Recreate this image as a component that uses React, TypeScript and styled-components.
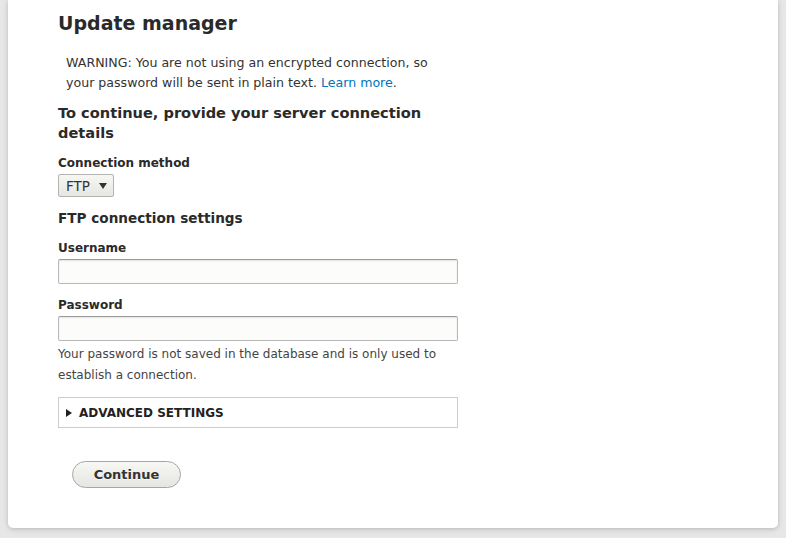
import React from "react";
import styled, { createGlobalStyle } from "styled-components";

const Global = createGlobalStyle`
  html, body { margin: 0; padding: 0; }
  body {
    background: #e7e7e7;
    font-family: "DejaVu Sans", "Lucida Grande", sans-serif;
    color: #333;
    height: 538px;
    overflow: hidden;
  }
`;

const Card = styled.main`
  margin-left: 8px;
  width: 770px;
  box-sizing: border-box;
  padding: 11px 50px 40px;
  background: #fff;
  border-radius: 0 0 5px 5px;
  box-shadow: 0 1px 4px rgba(0, 0, 0, 0.15), 0 2px 8px rgba(0, 0, 0, 0.06);
`;

const Column = styled.div`
  width: 400px;
  display: flex;
  flex-direction: column;
`;

const Title = styled.h1`
  margin: 0;
  font-size: 19px;
  line-height: 24px;
  font-weight: bold;
  color: #2a2a2a;
`;

const Warning = styled.p`
  margin: 18px 0 0;
  padding-left: 8px;
  font-size: 12.6px;
  line-height: 20px;
  color: #333;
`;

const Link = styled.a`
  color: #0074bd;
  text-decoration: none;
`;

const Heading = styled.h2<{ $top: number; $size: number }>`
  margin: ${(p) => p.$top}px 0 0;
  font-size: ${(p) => p.$size}px;
  line-height: 20px;
  font-weight: bold;
  color: #2a2a2a;
`;

const Label = styled.label<{ $top: number }>`
  display: block;
  margin-top: ${(p) => p.$top}px;
  font-size: 12px;
  line-height: 18px;
  font-weight: bold;
  color: #2a2a2a;
`;

const SelectBox = styled.div`
  margin-top: 2px;
  align-self: flex-start;
  display: flex;
  align-items: center;
  gap: 9px;
  height: 23px;
  width: 56px;
  box-sizing: border-box;
  padding: 0 6px 0 7px;
  border: 1px solid #b3b3b3;
  border-radius: 2px;
  background: linear-gradient(#f6f6f3, #e6e6e3);
  font-size: 13.5px;
  color: #333;
`;

const Caret = styled.span`
  width: 0;
  height: 0;
  border-left: 4px solid transparent;
  border-right: 4px solid transparent;
  border-top: 6px solid #333;
`;

const Input = styled.input`
  margin-top: 2px;
  width: 400px;
  height: 25px;
  box-sizing: border-box;
  border: 1px solid #b8b8b8;
  border-top-color: #999;
  border-radius: 2px;
  background: #fcfcfa;
  box-shadow: inset 0 1px 2px rgba(0, 0, 0, 0.1);
  font: inherit;
  outline: none;
`;

const Description = styled.p`
  margin: 3px 0 0;
  font-size: 12px;
  line-height: 21px;
  color: #444;
`;

const Details = styled.div`
  margin-top: 11px;
  height: 31px;
  box-sizing: border-box;
  border: 1px solid #ccc;
  display: flex;
  align-items: center;
  padding-left: 7px;
  gap: 7px;
  font-size: 12px;
  font-weight: bold;
  text-transform: uppercase;
  color: #222;
`;

const Arrow = styled.span`
  width: 0;
  height: 0;
  border-top: 4px solid transparent;
  border-bottom: 4px solid transparent;
  border-left: 6px solid #222;
`;

const Actions = styled.div`
  margin-top: 33px;
  padding-left: 14px;
  display: flex;
`;

const Button = styled.button`
  height: 27px;
  width: 109px;
  border: 1px solid #a6a6a6;
  border-radius: 20em;
  background: linear-gradient(#f7f7f4, #e5e5e1);
  font-family: inherit;
  font-size: 13px;
  font-weight: bold;
  color: #333;
  text-shadow: 0 1px rgba(255, 255, 255, 0.6);
  padding: 0;
`;

export default function App() {
  return (
    <>
      <Global />
      <Card>
        <Column>
          <Title>Update manager</Title>
          <Warning>
            WARNING: You are not using an encrypted connection, so your password will be sent in
            plain text. <Link href="#">Learn more</Link>.
          </Warning>
          <Heading $top={10} $size={14.6}>
            To continue, provide your server connection details
          </Heading>
          <Label $top={11}>Connection method</Label>
          <SelectBox>
            <span>FTP</span>
            <Caret />
          </SelectBox>
          <Heading $top={11} $size={13.6}>
            FTP connection settings
          </Heading>
          <Label $top={11}>Username</Label>
          <Input type="text" />
          <Label $top={12}>Password</Label>
          <Input type="password" />
          <Description>
            Your password is not saved in the database and is only used to establish a connection.
          </Description>
          <Details>
            <Arrow />
            <span>Advanced settings</span>
          </Details>
          <Actions>
            <Button>Continue</Button>
          </Actions>
        </Column>
      </Card>
    </>
  );
}
